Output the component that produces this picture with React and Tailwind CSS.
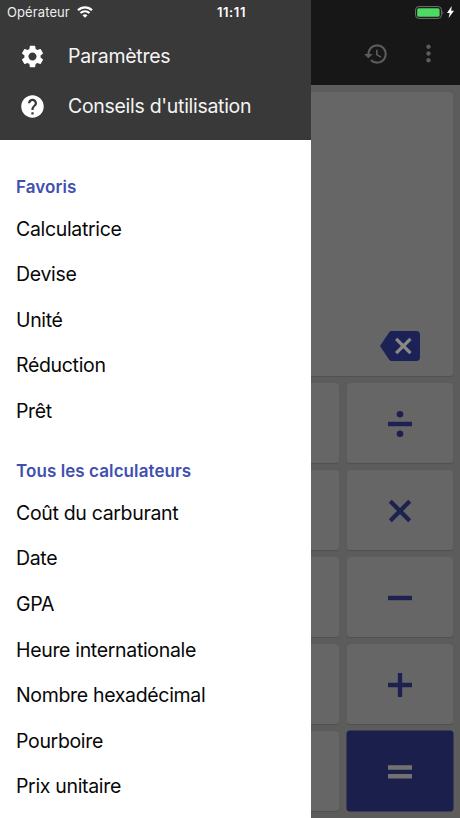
import { MdSettings, MdHelp, MdHistory, MdMoreVert, MdBackspace } from "react-icons/md";

const favorites = ["Calculatrice", "Devise", "Unité", "Réduction", "Prêt"];

const calculators = [
  "Coût du carburant",
  "Date",
  "GPA",
  "Heure internationale",
  "Nombre hexadécimal",
  "Pourboire",
  "Prix unitaire",
];

function Section({ title, items }) {
  return (
    <section>
      <h2 className="flex h-[38px] items-center pt-[2px] text-[17px] font-semibold tracking-[0.08px] text-[#4150b0]">{title}</h2>
      <ul>
        {items.map((label) => (
          <li key={label} className="flex h-[45.55px] items-center pt-px text-[19.5px] tracking-[-0.33px] whitespace-nowrap text-[#080808]">
            {label}
          </li>
        ))}
      </ul>
    </section>
  );
}

function Drawer() {
  return (
    <nav className="z-10 h-full w-[311px] shrink-0 overflow-hidden bg-white">
      <div className="flex h-[140px] flex-col bg-[#393939] pt-[31px] text-[19.5px] tracking-[-0.3px] whitespace-nowrap text-[#f4f4f4]">
        <div className="flex h-[50px] items-center pl-[18.5px]">
          <MdSettings className="size-[27px] shrink-0 text-white" />
          <span className="ml-[22.5px] pt-[2px]">Paramètres</span>
        </div>
        <div className="flex h-[50px] items-center pl-[18.5px]">
          <MdHelp className="size-[27px] shrink-0 text-white" />
          <span className="ml-[22.5px] pt-[2px]">Conseils d'utilisation</span>
        </div>
      </div>
      <div className="flex flex-col gap-[18.5px] pt-[28px] pl-4">
        <Section title="Favoris" items={favorites} />
        <Section title="Tous les calculateurs" items={calculators} />
      </div>
    </nav>
  );
}

const operators = [
  <g key="divide" fill="currentColor">
    <rect x="0" y="9.8" width="24" height="4.4" />
    <circle cx="12" cy="2.2" r="3.3" />
    <circle cx="12" cy="21.8" r="3.3" />
  </g>,
  <path key="times" d="M2.3 2.3 21.7 21.7M21.7 2.3 2.3 21.7" stroke="currentColor" strokeWidth="4.3" />,
  <rect key="minus" x="0" y="9.8" width="24" height="4.4" fill="currentColor" />,
  <path key="plus" d="M0 12H24M12 0V24" stroke="currentColor" strokeWidth="4.3" />,
  <path key="equals" d="M0 7.6H24M0 16.2H24" stroke="currentColor" strokeWidth="4.5" />,
];

function Keypad() {
  return (
    <div className="mt-[7px] grid grid-cols-[28px_106.5px] gap-x-[7.5px] gap-y-[7.25px]">
      {operators.map((glyph, i) => {
        const last = i === operators.length - 1;
        return [
          <div key={`n${i}`} className="h-[79.75px] rounded-r-[3px] bg-[#666] shadow-[0_0.5px_1px_#505050]" />,
          <div
            key={`o${i}`}
            className={`flex h-[79.75px] items-center justify-center rounded-[3px] pt-[2px] ${
              last ? "bg-[#1a204b] text-[#727272] shadow-[0_0_0_0.5px_#1a204b]" : "bg-[#666] text-[#1c214f] shadow-[0_0.5px_1px_#505050]"
            }`}
          >
            <svg viewBox="0 0 24 24" className="size-6 overflow-visible" fill="none">
              {glyph}
            </svg>
          </div>,
        ];
      })}
    </div>
  );
}

function Calculator() {
  return (
    <main className="flex h-full w-[149px] flex-col bg-[#5c5c5c]">
      <header className="flex h-[84.5px] shrink-0 items-center bg-[#171717] pt-[23px] pl-[51.5px] text-[#5c5c5c]">
        <MdHistory className="size-[26px]" />
        <MdMoreVert className="ml-[26.5px] size-[27px]" />
      </header>
      <div className="mt-[7.5px] flex h-[284px] w-[142px] shrink-0 items-end justify-end rounded-r-[3px] bg-[#666] pr-[33px] pb-[10px] shadow-[0_0.5px_1px_#505050]">
        <div className="flex bg-[linear-gradient(#8a8a84,#8a8a84)] bg-[length:20px_20px] bg-[position:14px_10px] bg-no-repeat">
          <MdBackspace className="size-[40px] text-[#1c2256]" />
        </div>
      </div>
      <Keypad />
    </main>
  );
}

function StatusBar() {
  return (
    <div className="absolute inset-x-0 top-0 z-20 grid h-6 grid-cols-[1fr_auto_1fr] items-center pr-[6px] pl-[7px] text-white">
      <div className="flex items-center gap-[7px]">
        <span className="pt-px text-[13px] tracking-[0.1px] text-[#eee]">Opérateur</span>
        <svg viewBox="0 0 16 12" className="h-[12px] w-[16px]" fill="none" stroke="currentColor" strokeWidth="2.1">
          <path d="M1 4.3C5 .4 11 .4 15 4.3" />
          <path d="M3.5 7C6 4.6 10 4.6 12.5 7" />
          <path d="M5.5 9.2C7 7.8 9 7.8 10.5 9.2L8 11.8Z" fill="currentColor" stroke="none" />
        </svg>
      </div>
      <span className="pt-px pl-[2px] text-[13px] font-semibold tracking-[0.6px]">11:11</span>
      <div className="flex items-center justify-end gap-[3px]">
        <svg viewBox="0 0 29 13" className="h-[13px] w-[29px]">
          <rect x=".6" y=".6" width="25.8" height="11.8" rx="3.2" fill="none" stroke="#6c746c" strokeWidth="1" />
          <rect x="2.2" y="2.2" width="22.4" height="8.6" rx="1.6" fill="#4cd964" />
          <path d="M27.5 4.5Q29 6.5 27.5 8.5Z" fill="#777" />
        </svg>
        <svg viewBox="0 0 7 12" className="h-[12px] w-[7px]" fill="currentColor">
          <path d="M4.7 0 0 6.9H2.7L1.6 12 7 4.8H4.2Z" />
        </svg>
      </div>
    </div>
  );
}

export default function App() {
  return (
    <div className="relative flex h-[818px] w-[460px] overflow-hidden font-[Inter,sans-serif]">
      <Drawer />
      <Calculator />
      <StatusBar />
    </div>
  );
}
